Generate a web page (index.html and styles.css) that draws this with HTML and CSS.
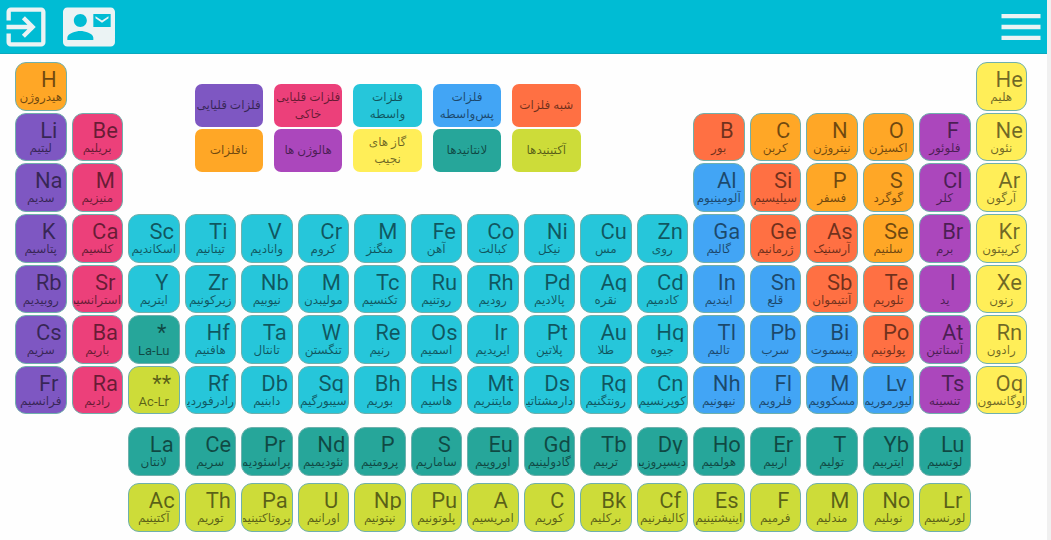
FILE: index.html
```html
<!DOCTYPE html>
<html lang="fa">
<head>
<meta charset="utf-8">
<meta name="viewport" content="width=device-width, initial-scale=1">
<title>جدول تناوبی</title>
<link rel="stylesheet" href="styles.css">
</head>
<body>
<div class="page">
  <header class="bar">
    <button class="bar-button" type="button" aria-label="خروج">
      <svg class="icon" viewBox="0 0 24 24"><path d="M10.09 15.59L11.5 17l5-5-5-5-1.41 1.41L12.67 11H3v2h9.67l-2.58 2.59zM19 3H5c-1.11 0-2 .9-2 2v4h2V5h14v14H5v-4H3v4c0 1.1.89 2 2 2h14c1.1 0 2-.9 2-2V5c0-1.1-.9-2-2-2z"/></svg>
    </button>
    <button class="bar-button" type="button" aria-label="تماس">
      <svg class="icon" viewBox="0 0 24 24"><path d="M21 8V7l-3 2-3-2v1l3 2 3-2zm1-5H2C.9 3 0 3.9 0 5v14c0 1.1.9 2 2 2h20c1.1 0 1.99-.9 1.99-2L24 5c0-1.1-.9-2-2-2zM8 6c1.66 0 3 1.34 3 3s-1.34 3-3 3-3-1.34-3-3 1.34-3 3-3zm6 12H2v-1c0-2 4-3.1 6-3.1s6 1.1 6 3.1v1zm8-6h-8V6h8v6z"/></svg>
    </button>
    <button class="bar-button bar-menu" type="button" aria-label="منو">
      <svg class="icon" viewBox="0 0 24 24"><path d="M3 18h18v-2H3v2zm0-5h18v-2H3v2zm0-7v2h18V6H3z"/></svg>
    </button>
  </header>
  <main class="content">
    <div class="table" id="main-table">
      <ul class="legend">
        <li class="legend-item alkali">فلزات قلیایی</li>
        <li class="legend-item earth">فلزات قلیایی<br>خاکی</li>
        <li class="legend-item transition">فلزات<br>واسطه</li>
        <li class="legend-item post">فلزات<br>پس‌واسطه</li>
        <li class="legend-item metalloid">شبه فلزات</li>
        <li class="legend-item nonmetal">نافلزات</li>
        <li class="legend-item halogen">هالوژن ها</li>
        <li class="legend-item noble">گاز های<br>نجیب</li>
        <li class="legend-item lanthanide">لانتانیدها</li>
        <li class="legend-item actinide">آکتینیدها</li>
      </ul>
    </div>
    <div class="table series" id="series-table"></div>
  </main>
</div>
<script src="script.js"></script>
</body>
</html>
```

FILE: styles.css
```css
* {
  box-sizing: border-box;
}

body {
  margin: 0;
  min-height: 100vh;
  padding-right: 4px;
  background: #f0f0f0;
  font-family: Roboto, "DejaVu Sans", sans-serif;
  color: rgba(0, 0, 0, 0.56);
}

.page {
  min-height: 100vh;
  background: #fefefe;
}

.bar {
  display: flex;
  gap: 11px;
  padding-top: 1px;
  background: #00bcd4;
  border-bottom: 1px solid #0aa9be;
}

.bar-button {
  padding: 0;
  border: 0;
  background: none;
  color: #ebf3f4;
}

.bar-menu {
  margin-left: auto;
}

.icon {
  display: block;
  width: 52px;
  height: 52px;
  fill: currentColor;
}

.content {
  padding: 8px 20px 8px 15px;
}

.table {
  display: grid;
  grid-template-columns: repeat(18, minmax(0, 1fr));
  gap: 2px 5px;
}

.series {
  margin-top: 13px;
  row-gap: 7px;
}

.cell {
  display: flex;
  flex-direction: column;
  aspect-ratio: 18 / 17;
  min-width: 0;
  padding: 7px 1px 0;
  border: 1px solid #6fb0ac;
  border-radius: 11px;
  font-family: inherit;
  color: inherit;
  text-align: center;
}

.symbol {
  height: 19px;
  margin-left: 16px;
  font-size: 22px;
  line-height: 19px;
  direction: ltr;
}

.symbol-descending {
  overflow: hidden;
}

.name {
  height: 20px;
  overflow: hidden;
  font-size: 12px;
  line-height: 17px;
  white-space: nowrap;
  direction: rtl;
}

.name-latin {
  font-size: 13px;
  direction: ltr;
}

.legend {
  grid-area: 1 / 4 / 4 / 12;
  display: grid;
  grid-template-columns: repeat(5, minmax(0, 1fr));
  grid-auto-rows: 43px;
  gap: 2px 11px;
  align-content: start;
  margin: 0;
  padding: 22px 51px 0 10px;
  list-style: none;
}

.legend-item {
  display: grid;
  place-content: center;
  border-radius: 7px;
  font-size: 12px;
  line-height: 17px;
  text-align: center;
  white-space: nowrap;
  direction: rtl;
}

.alkali { background: #7e57c2; }
.earth { background: #ec407a; }
.transition { background: #26c6da; }
.post { background: #42a5f5; }
.metalloid { background: #ff7043; }
.nonmetal { background: #ffa726; }
.halogen { background: #ab47bc; }
.noble { background: #ffee58; }
.lanthanide { background: #26a69a; }
.actinide { background: #cddc39; }
```

FILE: script.js
```js
// Each run: [table, row, first column, group, "symbol name" list]
const runs = [
  ["main", 1, 1, "nonmetal", "H هیدروژن"],
  ["main", 1, 18, "noble", "He هلیم"],
  ["main", 2, 1, "alkali", "Li لیتیم"],
  ["main", 2, 2, "earth", "Be بریلیم"],
  ["main", 2, 13, "metalloid", "B بور"],
  ["main", 2, 14, "nonmetal", "C کربن,N نیتروژن,O اکسیژن"],
  ["main", 2, 17, "halogen", "F فلوئور"],
  ["main", 2, 18, "noble", "Ne نئون"],
  ["main", 3, 1, "alkali", "Na سدیم"],
  ["main", 3, 2, "earth", "M منیزیم"],
  ["main", 3, 13, "post", "Al آلومینیوم"],
  ["main", 3, 14, "metalloid", "Si سیلیسیم"],
  ["main", 3, 15, "nonmetal", "P فسفر,S گوگرد"],
  ["main", 3, 17, "halogen", "Cl کلر"],
  ["main", 3, 18, "noble", "Ar آرگون"],
  ["main", 4, 1, "alkali", "K پتاسیم"],
  ["main", 4, 2, "earth", "Ca کلسیم"],
  ["main", 4, 3, "transition", "Sc اسکاندیم,Ti تیتانیم,V وانادیم,Cr کروم,M منگنز,Fe آهن,Co کبالت,Ni نیکل,Cu مس,Zn روی"],
  ["main", 4, 13, "post", "Ga گالیم"],
  ["main", 4, 14, "metalloid", "Ge ژرمانیم,As آرسنیک"],
  ["main", 4, 16, "nonmetal", "Se سلنیم"],
  ["main", 4, 17, "halogen", "Br برم"],
  ["main", 4, 18, "noble", "Kr کریپتون"],
  ["main", 5, 1, "alkali", "Rb روبیدیم"],
  ["main", 5, 2, "earth", "Sr استرانسیم"],
  ["main", 5, 3, "transition", "Y ایتریم,Zr زیرکونیم,Nb نیوبیم,M مولیبدن,Tc تکنسیم,Ru روتنیم,Rh رودیم,Pd پالادیم,Ag نقره,Cd کادمیم"],
  ["main", 5, 13, "post", "In ایندیم,Sn قلع"],
  ["main", 5, 15, "metalloid", "Sb آنتیموان,Te تلوریم"],
  ["main", 5, 17, "halogen", "I ید"],
  ["main", 5, 18, "noble", "Xe زنون"],
  ["main", 6, 1, "alkali", "Cs سزیم"],
  ["main", 6, 2, "earth", "Ba باریم"],
  ["main", 6, 3, "lanthanide", "* La-Lu"],
  ["main", 6, 4, "transition", "Hf هافنیم,Ta تانتال,W تنگستن,Re رنیم,Os اسمیم,Ir ایریدیم,Pt پلاتین,Au طلا,Hg جیوه"],
  ["main", 6, 13, "post", "Tl تالیم,Pb سرب,Bi بیسموت"],
  ["main", 6, 16, "metalloid", "Po پولونیم"],
  ["main", 6, 17, "halogen", "At آستاتین"],
  ["main", 6, 18, "noble", "Rn رادون"],
  ["main", 7, 1, "alkali", "Fr فرانسیم"],
  ["main", 7, 2, "earth", "Ra رادیم"],
  ["main", 7, 3, "actinide", "** Ac-Lr"],
  ["main", 7, 4, "transition", "Rf رادرفوردیم,Db دابنیم,Sg سیبورگیم,Bh بوریم,Hs هاسیم,Mt مایتنریم,Ds دارمشتاتیم,Rg رونتگنیم,Cn کوپرنسیم"],
  ["main", 7, 13, "post", "Nh نیهونیم,Fl فلرویم,M مسکوویم,Lv لیورموریم"],
  ["main", 7, 17, "halogen", "Ts تنسینه"],
  ["main", 7, 18, "noble", "Og اوگانسون"],
  ["series", 1, 3, "lanthanide", "La لانتان,Ce سریم,Pr پراسئودیمیم,Nd نئودیمیم,P پرومتیم,S ساماریم,Eu اوروپیم,Gd گادولینیم,Tb تربیم,Dy دیسپروزیم,Ho هولمیم,Er اربیم,T تولیم,Yb ایتربیم,Lu لوتسیم"],
  ["series", 2, 3, "actinide", "Ac آکتینیم,Th توریم,Pa پروتاکتینیم,U اورانیم,Np نپتونیم,Pu پلوتونیم,A امریسیم,C کوریم,Bk برکلیم,Cf کالیفرنیم,Es اینیشتینیم,F فرمیم,M مندلیم,No نوبلیم,Lr لورنسیم"]
];

function addSpan(parent, className, text) {
  const span = document.createElement("span");
  span.className = className;
  span.textContent = text;
  parent.append(span);
}

for (const [table, row, column, group, list] of runs) {
  list.split(",").forEach((entry, index) => {
    const [symbol, name] = entry.split(" ");
    const cell = document.createElement("button");
    cell.type = "button";
    cell.className = "cell " + group;
    cell.style.gridArea = row + " / " + (column + index);
    addSpan(cell, /[gpy]/.test(symbol) ? "symbol symbol-descending" : "symbol", symbol);
    addSpan(cell, symbol.startsWith("*") ? "name name-latin" : "name", name);
    document.getElementById(table + "-table").append(cell);
  });
}
```
